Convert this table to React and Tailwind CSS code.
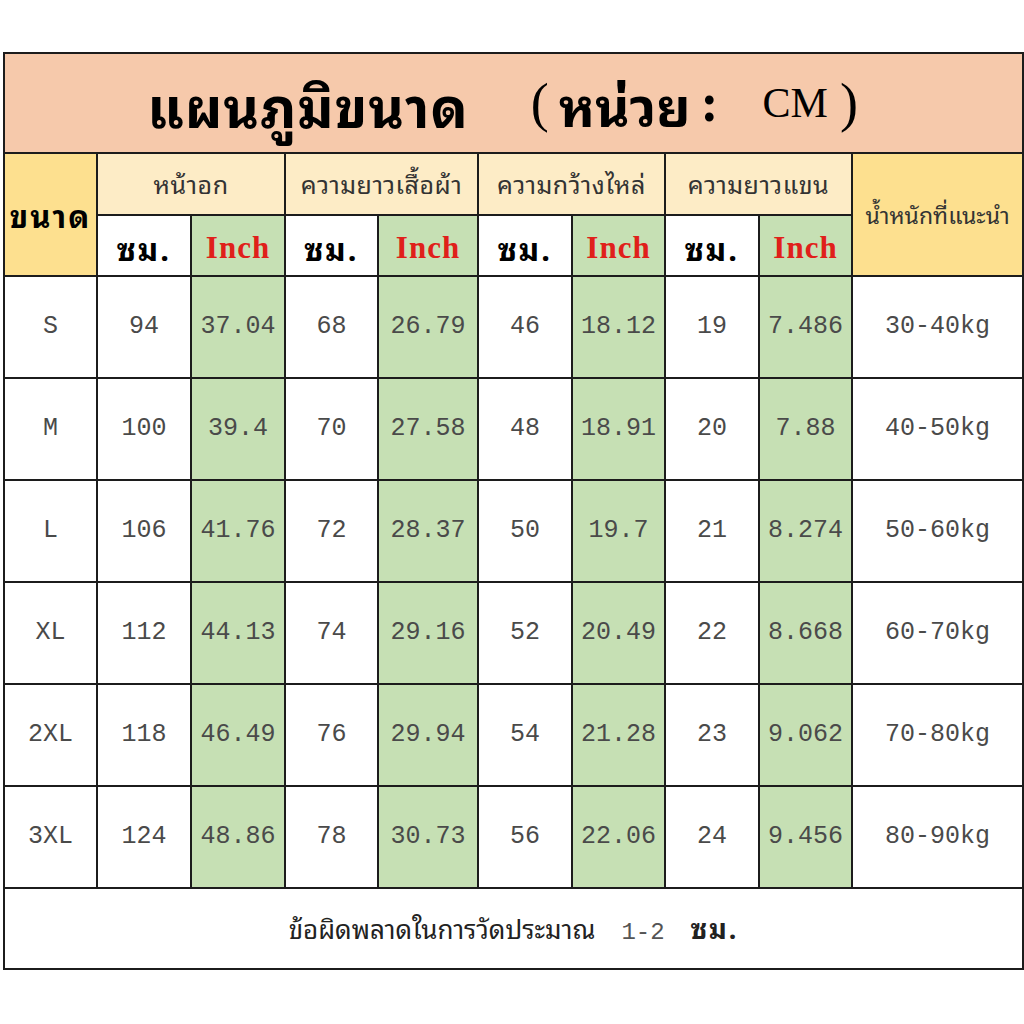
import React from 'react';

const thai = { fontFamily: '"Noto Sans Thai Looped", "Noto Sans Thai", Tahoma, "Noto Sans", "DejaVu Sans", sans-serif' };

const rows = [
    ['S', '94', '37.04', '68', '26.79', '46', '18.12', '19', '7.486', '30-40kg'],
    ['M', '100', '39.4', '70', '27.58', '48', '18.91', '20', '7.88', '40-50kg'],
    ['L', '106', '41.76', '72', '28.37', '50', '19.7', '21', '8.274', '50-60kg'],
    ['XL', '112', '44.13', '74', '29.16', '52', '20.49', '22', '8.668', '60-70kg'],
    ['2XL', '118', '46.49', '76', '29.94', '54', '21.28', '23', '9.062', '70-80kg'],
    ['3XL', '124', '48.86', '78', '30.73', '56', '22.06', '24', '9.456', '80-90kg'],
];

const groups = ['หน้าอก', 'ความยาวเสื้อผ้า', 'ความกว้างไหล่', 'ความยาวแขน'];

const cell = 'border-2 border-[#1c1c1c] text-center align-middle p-0';

const App = () => {
    return (
        <div className="w-[1024px] h-[1024px] bg-white pt-[52px] pl-[3px]">
            <table className="table-fixed border-collapse w-[1019px] border-2 border-[#1c1c1c]">
                <colgroup>
                    <col className="w-[93px]" />
                    <col className="w-[94px]" />
                    <col className="w-[94px]" />
                    <col className="w-[93px]" />
                    <col className="w-[100px]" />
                    <col className="w-[94px]" />
                    <col className="w-[93px]" />
                    <col className="w-[94px]" />
                    <col className="w-[93px]" />
                    <col className="w-[171px]" />
                </colgroup>
                <tbody>
                    {/* title band */}
                    <tr className="h-[100px]">
                        <td colSpan={10} className={`${cell} bg-[#f6c9ab]`}>
                            <div className="flex items-center justify-center text-black pr-[22px]">
                                <span style={thai} className="text-[55px] font-bold tracking-[1px] leading-none">แผนภูมิขนาด</span>
                                <span className="font-['Liberation_Serif'] text-[54px] ml-[62px] leading-none">(</span>
                                <span style={thai} className="text-[53px] font-bold ml-[10px] leading-none">หน่วย</span>
                                <span className="font-['Liberation_Serif'] text-[54px] font-bold ml-[10px] leading-none">:</span>
                                <span className="font-['Liberation_Serif'] text-[42px] ml-[44px] leading-none">CM</span>
                                <span className="font-['Liberation_Serif'] text-[54px] ml-[12px] leading-none">)</span>
                            </div>
                        </td>
                    </tr>

                    {/* header row 1 */}
                    <tr className="h-[62px]">
                        <td rowSpan={2} className={`${cell} bg-[#fde08f]`}>
                            <span style={thai} className="text-[31px] font-bold text-black tracking-[2px]">ขนาด</span>
                        </td>
                        {groups.map((g) => (
                            <td key={g} colSpan={2} className={`${cell} bg-[#fdecc6]`}>
                                <span style={thai} className="text-[25px] text-[#333] tracking-[0.5px]">{g}</span>
                            </td>
                        ))}
                        <td rowSpan={2} className={`${cell} bg-[#fde08f]`}>
                            <span style={thai} className="text-[23px] text-[#333] whitespace-nowrap">น้ำหนักที่แนะนำ</span>
                        </td>
                    </tr>

                    {/* header row 2 */}
                    <tr className="h-[61px]">
                        {groups.map((g) => (
                            <React.Fragment key={g}>
                                <td className={`${cell} bg-white pt-[4px]`}>
                                    <span style={thai} className="text-[31px] font-bold text-black tracking-[2px]">ซม.</span>
                                </td>
                                <td className={`${cell} bg-[#c6e0b4] pt-[6px]`}>
                                    <span className="font-['Liberation_Serif'] text-[31px] font-bold text-[#e0201a] tracking-[1px]">Inch</span>
                                </td>
                            </React.Fragment>
                        ))}
                    </tr>

                    {rows.map((r) => (
                        <tr key={r[0]} className="h-[102px]">
                            {r.map((v, i) => (
                                <td
                                    key={i}
                                    className={`${cell} ${i % 2 === 0 && i > 0 && i < 9 ? 'bg-[#c6e0b4]' : 'bg-white'}`}
                                >
                                    <span className="font-['Liberation_Mono'] text-[25px] text-[#4a4a4a]">{v}</span>
                                </td>
                            ))}
                        </tr>
                    ))}

                    {/* footer note */}
                    <tr className="h-[81px]">
                        <td colSpan={10} className={`${cell} bg-white`}>
                            <span style={thai} className="text-[26px] text-[#222]">ข้อผิดพลาดในการวัดประมาณ</span>
                            <span className="font-['Liberation_Mono'] text-[24px] text-[#555] mx-[26px]">1-2</span>
                            <span style={thai} className="text-[27px] font-bold text-[#222] tracking-[2px]">ซม.</span>
                        </td>
                    </tr>
                </tbody>
            </table>
        </div>
    );
};

export default App;
